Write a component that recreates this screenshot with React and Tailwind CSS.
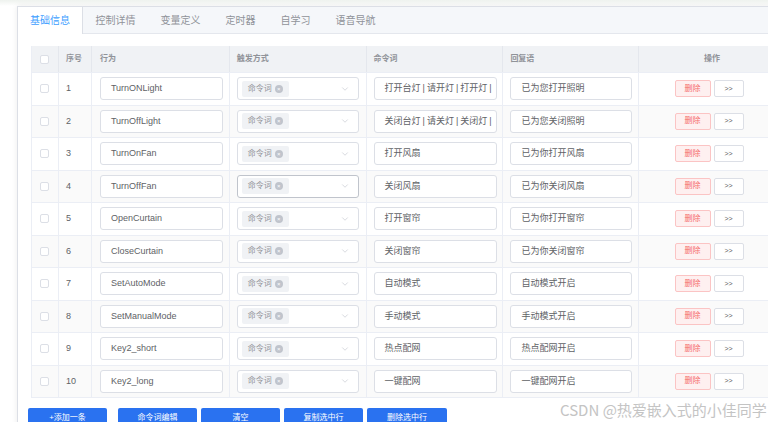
import React from "react";
import { ChevronDown } from "lucide-react";

const rows = [
  ["1", "TurnONLight", "打开台灯|请开灯|打开灯|", "已为您打开照明"],
  ["2", "TurnOffLight", "关闭台灯|请关灯|关闭灯|", "已为您关闭照明"],
  ["3", "TurnOnFan", "打开风扇", "已为你打开风扇"],
  ["4", "TurnOffFan", "关闭风扇", "已为你关闭风扇"],
  ["5", "OpenCurtain", "打开窗帘", "已为你打开窗帘"],
  ["6", "CloseCurtain", "关闭窗帘", "已为你关闭窗帘"],
  ["7", "SetAutoMode", "自动模式", "自动模式开启"],
  ["8", "SetManualMode", "手动模式", "手动模式开启"],
  ["9", "Key2_short", "热点配网", "热点配网开启"],
  ["10", "Key2_long", "一键配网", "一键配网开启"],
];

const tabs = ["基础信息", "控制详情", "变量定义", "定时器", "自学习", "语音导航"];

function Checkbox() {
  return <div className="w-[9px] h-[9px] border border-[#dcdfe6] rounded-[2px] bg-white" />;
}

function Piped({ text }) {
  const parts = text.split("|");
  return (
    <>
      {parts.map((p, i) => (
        <React.Fragment key={i}>
          {p}
          {i < parts.length - 1 && <span className="mx-[2px]">|</span>}
        </React.Fragment>
      ))}
    </>
  );
}

function TextBox({ children, w }) {
  return (
    <div
      className={`${w} h-[23px] border border-[#dcdfe6] rounded-[3px] bg-white flex items-center pl-[10px] pr-[2px] overflow-hidden whitespace-nowrap text-[9px] text-[#606266]`}
    >
      {children}
    </div>
  );
}

function SelectBox({ hover }) {
  return (
    <div
      className={`w-[122px] h-[23px] border ${hover ? "border-[#c0c4cc]" : "border-[#dcdfe6]"} rounded-[3px] bg-white flex items-center pl-[4px] pr-[8px] justify-between`}
    >
      <div className="h-[16px] w-[47px] bg-[#f0f2f5] rounded-[2px] flex items-center pl-[6px] gap-[3px] text-[8px] text-[#909399]">
        <span>命令词</span>
        <span className="w-[8px] h-[8px] rounded-full bg-[#c0c4cc] flex items-center justify-center text-white text-[6px] leading-none">×</span>
      </div>
      <ChevronDown size={10} strokeWidth={1.5} className="text-[#c0c4cc]" />
    </div>
  );
}

export default function App() {
  return (
    <div
      className="relative w-[768px] h-[422px] overflow-hidden bg-white"
      style={{ fontFamily: '"Liberation Sans", "Noto Sans CJK SC", sans-serif' }}
    >
      <div className="h-[6px] bg-gradient-to-b from-[#eef2ee] to-white" />
      <div className="ml-[17px] w-[800px] border border-[#dcdfe6] shadow-[0_0_6px_rgba(0,0,0,0.08)] bg-white">
        <div className="h-[27px] bg-[#f5f7fa] border-b border-[#e4e7ed] flex">
          {tabs.map((t, i) =>
            i === 0 ? (
              <div
                key={t}
                className="h-[27px] px-[12px] bg-white border-r border-[#dcdfe6] flex items-center text-[10px] text-[#409eff]"
              >
                {t}
              </div>
            ) : (
              <div key={t} className="h-[26px] px-[12.5px] flex items-center text-[10px] text-[#909399]">
                {t}
              </div>
            )
          )}
        </div>
        <div className="pt-[12px] pl-[13px] pb-[10px]">
          <div className="w-[748px] border-l border-b border-[#ebeef5]">
            <div className="flex h-[26px] bg-[#f0f2f5] text-[8px] font-semibold text-[#909399]">
              <div className="w-[27px] border-r border-[#e4e7ed] flex items-center justify-center">
                <Checkbox />
              </div>
              <div className="w-[33px] border-r border-[#e4e7ed] flex items-center pl-[7px]">序号</div>
              <div className="w-[138px] border-r border-[#e4e7ed] flex items-center pl-[8px]">行为</div>
              <div className="w-[137px] border-r border-[#e4e7ed] flex items-center pl-[7px]">触发方式</div>
              <div className="w-[137px] border-r border-[#e4e7ed] flex items-center pl-[7px]">命令词</div>
              <div className="w-[136px] border-r border-[#e4e7ed] flex items-center pl-[7px]">回复语</div>
              <div className="w-[140px] flex items-center justify-center pl-[6px]">操作</div>
            </div>
            {rows.map((r, i) => (
              <div
                key={r[0]}
                className={`flex h-[32.5px] border-t border-[#ebeef5] ${i % 2 === 1 ? "bg-[#fafafa]" : "bg-white"}`}
              >
                <div className="w-[27px] border-r border-[#ebeef5] flex items-center justify-center">
                  <Checkbox />
                </div>
                <div className="w-[33px] border-r border-[#ebeef5] flex items-center pl-[7px] text-[9px] text-[#606266]">
                  {r[0]}
                </div>
                <div className="w-[138px] border-r border-[#ebeef5] flex items-center pl-[8px]">
                  <TextBox w="w-[123px]">{r[1]}</TextBox>
                </div>
                <div className="w-[137px] border-r border-[#ebeef5] flex items-center pl-[7px]">
                  <SelectBox hover={i === 3} />
                </div>
                <div className="w-[137px] border-r border-[#ebeef5] flex items-center pl-[7px]">
                  <TextBox w="w-[123px]">
                    <Piped text={r[2]} />
                  </TextBox>
                </div>
                <div className="w-[136px] border-r border-[#ebeef5] flex items-center pl-[7px]">
                  <TextBox w="w-[122px]">{r[3]}</TextBox>
                </div>
                <div className="w-[140px] flex items-center justify-center gap-[3px]">
                  <div className="w-[36px] h-[17px] rounded-[2px] bg-[#fef0f0] border border-[#fbc4c4] flex items-center justify-center text-[8px] text-[#f56c6c]">
                    删除
                  </div>
                  <div className="w-[30px] h-[17px] rounded-[2px] bg-white border border-[#dcdfe6] flex items-center justify-center text-[7px] text-[#606266]">
                    &gt;&gt;
                  </div>
                </div>
              </div>
            ))}
          </div>
          <div className="flex mt-[10px] -ml-[3px] text-[8px] text-white">
            <div className="w-[79px] h-[20px] rounded-[2px] bg-[#2a72f0] flex items-center justify-center">+添加一条</div>
            <div className="w-[79px] h-[20px] ml-[11px] rounded-[2px] bg-[#2a72f0] flex items-center justify-center">命令词编辑</div>
            <div className="w-[79px] h-[20px] ml-[4px] rounded-[2px] bg-[#2a72f0] flex items-center justify-center">清空</div>
            <div className="w-[79px] h-[20px] ml-[4px] rounded-[2px] bg-[#2a72f0] flex items-center justify-center">复制选中行</div>
            <div className="w-[80px] h-[20px] ml-[4px] rounded-[2px] bg-[#2a72f0] flex items-center justify-center">删除选中行</div>
          </div>
        </div>
      </div>
      <div
        className="absolute left-[560px] top-[399px] text-[15px] text-[#c4c4c4] whitespace-nowrap"
        style={{ fontFamily: '"Noto Sans CJK SC", sans-serif' }}
      >
        CSDN @热爱嵌入式的小佳同学
      </div>
    </div>
  );
}
